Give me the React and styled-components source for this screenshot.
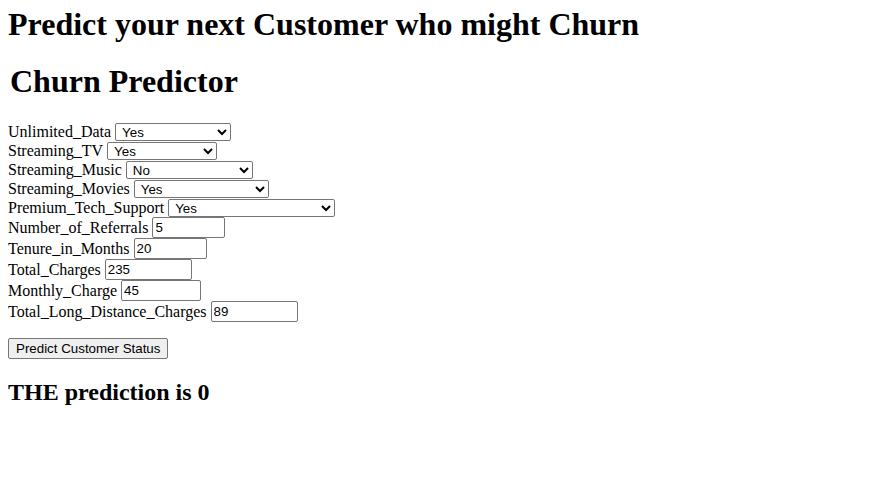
import React from "react";
import styled, { createGlobalStyle } from "styled-components";

const GlobalStyle = createGlobalStyle`
  body {
    margin: 8px;
    font-family: "Liberation Serif", "Times New Roman", serif;
    font-size: 16px;
    color: #000;
    background: #fff;
  }
`;

const Title = styled.h1`
  font-size: 32px;
  font-weight: bold;
  line-height: 37px;
  margin: ${(p) => (p.sub ? "0 0 22px" : "-2px 0 20px")};
  padding-left: ${(p) => (p.sub ? "2px" : "0")};
`;

const Form = styled.form`
  margin: 0;
`;

const Row = styled.div`
  display: flex;
  align-items: center;
  height: ${(p) => (p.tall ? "21px" : "19px")};
  line-height: 18px;
`;

const Label = styled.label`
  margin-right: 4px;
`;

const Select = styled.select`
  font-family: "Liberation Sans", Arial, sans-serif;
  font-size: 13.33px;
  height: 18px;
  width: ${(p) => p.w}px;
  border: 1px solid #767676;
  border-radius: 2px;
  background: #fff;
  color: #000;
  padding: 0 0 0 2px;
`;

const Input = styled.input`
  font-family: "Liberation Sans", Arial, sans-serif;
  font-size: 13.33px;
  height: 21px;
  box-sizing: border-box;
  width: ${(p) => p.w}px;
  border: 1px solid #767676;
  border-radius: 2px;
  padding: 1px 2px;
  color: #000;
`;

const Button = styled.button`
  margin-top: 16px;
  font-family: "Liberation Sans", Arial, sans-serif;
  font-size: 13.33px;
  height: 21px;
  padding: 1px 7px;
  background: #efefef;
  border: 1px solid #767676;
  border-radius: 2px;
  color: #000;
`;

const Result = styled.h2`
  font-size: 24px;
  font-weight: bold;
  margin: 20px 0 18px;
`;

const selects = [
  ["Unlimited_Data", "Yes", 116],
  ["Streaming_TV", "Yes", 110],
  ["Streaming_Music", "No", 127],
  ["Streaming_Movies", "Yes", 135],
  ["Premium_Tech_Support", "Yes", 167],
];

const inputs = [
  ["Number_of_Referrals", "5", 73],
  ["Tenure_in_Months", "20", 73],
  ["Total_Charges", "235", 87],
  ["Monthly_Charge", "45", 80],
  ["Total_Long_Distance_Charges", "89", 87],
];

export default function App() {
  return (
    <>
      <GlobalStyle />
      <Title>Predict your next Customer who might Churn</Title>
      <Title sub>Churn Predictor</Title>
      <Form onSubmit={(e) => e.preventDefault()}>
        {selects.map(([name, val, w]) => (
          <Row key={name}>
            <Label htmlFor={name}>{name}</Label>
            <Select id={name} w={w} defaultValue={val}>
              <option>Yes</option>
              <option>No</option>
            </Select>
          </Row>
        ))}
        {inputs.map(([name, val, w]) => (
          <Row key={name} tall>
            <Label htmlFor={name}>{name}</Label>
            <Input id={name} w={w} defaultValue={val} />
          </Row>
        ))}
        <Button type="submit">Predict Customer Status</Button>
      </Form>
      <Result>THE prediction is 0</Result>
    </>
  );
}
